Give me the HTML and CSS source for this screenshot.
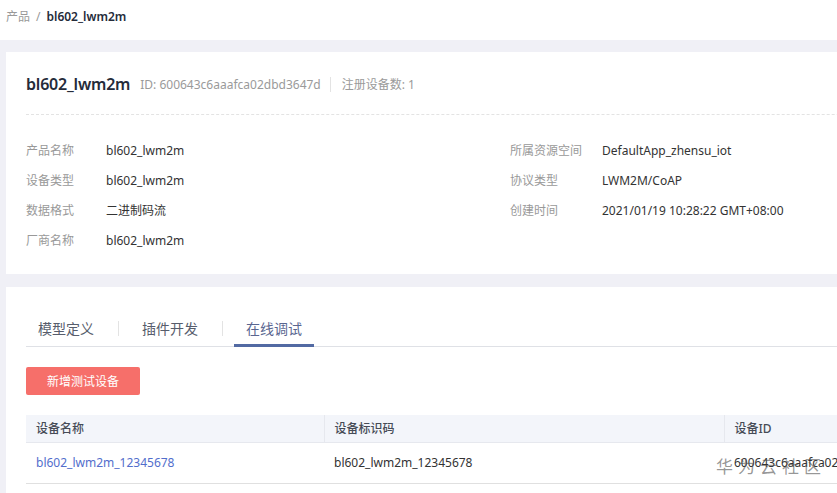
FILE: index.html
```html
<!DOCTYPE html>
<html lang="zh-CN">
<head>
<meta charset="utf-8">
<title>bl602_lwm2m</title>
<link rel="stylesheet" href="styles.css">
</head>
<body>
<div class="crumbs">
  <span class="crumb-link">产品</span>
  <span class="crumb-sep">/</span>
  <span class="crumb-current">bl602_lwm2m</span>
</div>

<main class="content">
  <section class="card product">
    <div class="product-head">
      <h1 class="product-name">bl602_lwm2m</h1>
      <span class="product-meta">ID: 600643c6aaafca02dbd3647d</span>
      <span class="meta-divider"></span>
      <span class="product-meta">注册设备数: 1</span>
    </div>
    <div class="info">
      <dl class="info-col info-left">
        <div class="info-row"><dt>产品名称</dt><dd>bl602_lwm2m</dd></div>
        <div class="info-row"><dt>设备类型</dt><dd>bl602_lwm2m</dd></div>
        <div class="info-row"><dt>数据格式</dt><dd>二进制码流</dd></div>
        <div class="info-row"><dt>厂商名称</dt><dd>bl602_lwm2m</dd></div>
      </dl>
      <dl class="info-col info-right">
        <div class="info-row"><dt>所属资源空间</dt><dd>DefaultApp_zhensu_iot</dd></div>
        <div class="info-row"><dt>协议类型</dt><dd>LWM2M/CoAP</dd></div>
        <div class="info-row"><dt>创建时间</dt><dd>2021/01/19 10:28:22 GMT+08:00</dd></div>
      </dl>
    </div>
  </section>

  <section class="card workspace">
    <nav class="tabs">
      <span class="tab">模型定义</span>
      <span class="tab-divider"></span>
      <span class="tab">插件开发</span>
      <span class="tab-divider"></span>
      <span class="tab tab-active">在线调试</span>
    </nav>

    <button class="btn-primary" type="button">新增测试设备</button>

    <div class="table-wrap">
      <table class="devices">
        <colgroup>
          <col class="col-name">
          <col class="col-code">
          <col class="col-id">
        </colgroup>
        <thead>
          <tr><th>设备名称</th><th>设备标识码</th><th>设备ID</th></tr>
        </thead>
        <tbody>
          <tr>
            <td><a class="device-link" href="#">bl602_lwm2m_12345678</a></td>
            <td>bl602_lwm2m_12345678</td>
            <td>600643c6aaafca02dbd3647d_bl602_lwm2m_12345678</td>
          </tr>
        </tbody>
      </table>
      <span class="watermark">华为云社区</span>
    </div>
  </section>
</main>
</body>
</html>
```

FILE: styles.css
```css
* {
  box-sizing: border-box;
}

html, body {
  margin: 0;
  padding: 0;
}

body {
  background: #f0f0f6;
  font-family: "Noto Sans", "Noto Sans CJK SC", sans-serif;
  font-size: 12px;
  color: #333;
  overflow: hidden;
  width: 837px;
  height: 493px;
}

/* breadcrumb strip */
.crumbs {
  height: 40px;
  background: #fff;
  padding: 9px 6px 0;
  line-height: 16px;
  display: flex;
  gap: 6px;
}

.crumb-link,
.crumb-sep {
  color: #999;
}

.crumb-current {
  color: #252b3a;
  font-weight: 600;
}

.content {
  width: 1200px;
  padding: 12px 0 0 6px;
  display: flex;
  flex-direction: column;
  gap: 13px;
}

.card {
  background: #fff;
  padding: 20px;
}

/* product summary */
.product {
  padding-top: 22px;
  padding-bottom: 18px;
}

.product-head {
  display: flex;
  align-items: center;
  height: 20px;
  padding-bottom: 20px;
  box-sizing: content-box;
  border-bottom: 1px dashed #e3e3e3;
}

.product-name {
  margin: 0 10px 0 0;
  font-size: 16px;
  font-weight: 600;
  color: #252b3a;
  line-height: 20px;
  letter-spacing: -0.2px;
}

.product-meta {
  color: #9a9a9a;
  font-size: 12px;
}

.meta-divider {
  width: 1px;
  height: 15px;
  background: #e3e3e3;
  margin: 0 11px 0 9px;
}

.info {
  display: flex;
  margin-top: 21px;
}

.info-col {
  margin: 0;
}

.info-left {
  width: 484px;
}

.info-row {
  display: flex;
  line-height: 30px;
  height: 30px;
}

.info-row dt {
  color: #999;
  width: 80px;
}

.info-right .info-row dt {
  width: 92px;
}

.info-row dd {
  margin: 0;
  color: #333;
}

/* tabs + device list */
.workspace {
  padding-top: 24px;
}

.tabs {
  display: flex;
  align-items: center;
  border-bottom: 1px solid #dfe1e6;
  height: 36px;
}

.tab {
  font-size: 14px;
  line-height: 20px;
  color: #575d6c;
  padding: 8px 12px 5px;
  width: 80px;
  border-bottom: 3px solid transparent;
  margin-bottom: -1px;
  align-self: flex-end;
}

.tab-active {
  color: #5a6690;
  border-bottom-color: #526aa3;
}

.tab-divider {
  width: 1px;
  height: 15px;
  background: #e3e3e3;
  margin: 0 11px 0 12px;
}

.btn-primary {
  display: block;
  margin-top: 20px;
  width: 114px;
  height: 28px;
  border: 0;
  border-radius: 2px;
  background: #f66f6a;
  color: #fff;
  font-family: inherit;
  font-size: 12px;
  padding: 0;
}

.table-wrap {
  position: relative;
  margin-top: 20px;
}

.devices {
  border-collapse: collapse;
  table-layout: fixed;
  width: 1100px;
}

.col-name { width: 298px; }
.col-code { width: 400px; }

.devices th {
  background: #f3f5fa;
  height: 27px;
  text-align: left;
  font-weight: 500;
  color: #464b56;
  padding: 0 10px;
  border-left: 1px solid #e6e8ee;
}

.devices th:first-child {
  border-left: 0;
}

.devices td {
  height: 41px;
  padding: 0 10px;
  border-top: 1px solid #e6e8ee;
  border-bottom: 1px solid #e0e0e0;
  color: #333;
  white-space: nowrap;
  overflow: hidden;
}

.device-link {
  color: #526ecc;
  text-decoration: none;
}

.watermark {
  position: absolute;
  left: 690px;
  top: 38px;
  font-size: 17px;
  letter-spacing: 5px;
  color: rgba(80, 80, 80, 0.6);
  pointer-events: none;
}
```
